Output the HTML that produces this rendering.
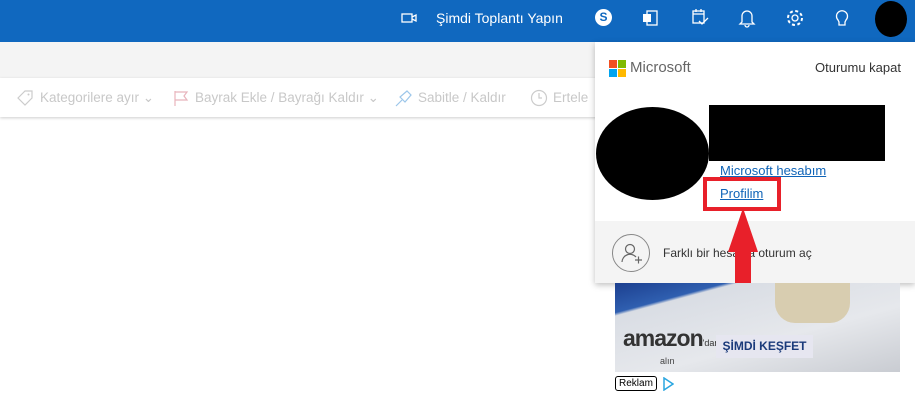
<!DOCTYPE html>
<html><head><meta charset="utf-8"><style>
*{margin:0;padding:0;box-sizing:border-box}
body{width:915px;height:400px;overflow:hidden;background:#fff;font-family:"Liberation Sans",sans-serif;position:relative}
.hdr{position:absolute;left:0;top:0;width:915px;height:42px;background:#1068bf}
.gray{position:absolute;left:0;top:42px;width:915px;height:36px;background:#f4f4f4}
.tb{position:absolute;left:0;top:78px;width:600px;height:39px;background:#fff;box-shadow:0 1px 3px rgba(0,0,0,.2);font-size:13.5px;color:#c8c8c8}
.tb span{position:absolute;top:12px}
.w{color:#fff;position:absolute;font-size:14px}
.panel{position:absolute;left:595px;top:42px;width:320px;height:241px;background:#fff;box-shadow:0 2px 6px rgba(0,0,0,.25)}
.psub{position:absolute;left:0;top:179px;width:320px;height:62px;background:#f4f4f4}
a{color:#0f64b8;text-decoration:underline;font-size:13px;position:absolute}
</style></head><body>
<div class="hdr">
 <svg style="position:absolute;left:401px;top:12px" width="16" height="12"><rect x="1" y="2" width="10" height="8" fill="none" stroke="#fff" stroke-width="1.3"/><path d="M11 5 L15 3 V9 L11 7" fill="none" stroke="#fff" stroke-width="1.3"/></svg>
 <div class="w" style="left:436px;top:10px">Şimdi Toplantı Yapın</div>
 <div style="position:absolute;left:595px;top:9px;width:17px;height:17px;border-radius:50%;background:#fff;color:#1068bf;font-weight:bold;font-size:12px;text-align:center;line-height:17px">S</div>
 <svg style="position:absolute;left:642px;top:9px" width="18" height="18"><rect x="5" y="2" width="10" height="14" fill="none" stroke="#fff" stroke-width="1.3"/><rect x="1" y="5" width="8" height="8" fill="#fff"/></svg>
 <svg style="position:absolute;left:691px;top:8px" width="18" height="18"><rect x="2" y="3" width="11" height="12" fill="none" stroke="#fff" stroke-width="1.3"/><path d="M2 6H13M5 1V4M10 1V4M8 13l3 3 6-6" fill="none" stroke="#fff" stroke-width="1.3"/></svg>
 <svg style="position:absolute;left:738px;top:8px" width="18" height="20"><path d="M4 14V8a5 5 0 0 1 10 0v6l2 2H2z M7 17a2 2 0 0 0 4 0" fill="none" stroke="#fff" stroke-width="1.3"/></svg>
 <svg style="position:absolute;left:785px;top:8px" width="20" height="20"><circle cx="10" cy="10" r="3" fill="none" stroke="#fff" stroke-width="1.3"/><circle cx="10" cy="10" r="7" fill="none" stroke="#fff" stroke-width="2" stroke-dasharray="3 2.5"/></svg>
 <svg style="position:absolute;left:834px;top:8px" width="16" height="20"><path d="M4 12a5.5 5.5 0 1 1 8 0l-1 2v3H5v-3z" fill="none" stroke="#fff" stroke-width="1.3"/></svg>
 <div style="position:absolute;left:875px;top:1px;width:32px;height:36px;border-radius:50%;background:#000"></div>
</div>
<div class="gray"></div>
<div class="tb">
 <svg style="position:absolute;left:16px;top:11px" width="18" height="18"><path d="M2 9 L9 2 H16 V9 L9 16 Z" fill="none" stroke="#ccc" stroke-width="1.2"/><circle cx="12.5" cy="5.5" r="1" fill="#ccc"/></svg>
 <span style="left:40px">Kategorilere ayır ⌄</span>
 <svg style="position:absolute;left:173px;top:12px" width="16" height="16"><path d="M2 1V16M2 2H14L11 6 14 10H2" fill="none" stroke="#e8b4bc" stroke-width="1.2"/></svg>
 <span style="left:195px">Bayrak Ekle / Bayrağı Kaldır ⌄</span>
 <svg style="position:absolute;left:395px;top:11px" width="18" height="18"><path d="M1 17L7 11M5 8L10 13 16 6 12 2Z" fill="none" stroke="#9cc6ea" stroke-width="1.2"/></svg>
 <span style="left:418px">Sabitle / Kaldır</span>
 <svg style="position:absolute;left:530px;top:11px" width="18" height="18"><circle cx="9" cy="9" r="7.5" fill="none" stroke="#ccc" stroke-width="1.2"/><path d="M9 4V9H12" fill="none" stroke="#ccc" stroke-width="1.2"/></svg>
 <span style="left:553px">Ertele</span>
</div>
<div class="panel">
 <svg style="position:absolute;left:14px;top:18px" width="18" height="18"><rect x="0" y="0" width="8" height="8" fill="#f25022"/><rect x="9" y="0" width="8" height="8" fill="#7fba00"/><rect x="0" y="9" width="8" height="8" fill="#00a4ef"/><rect x="9" y="9" width="8" height="8" fill="#ffb900"/></svg>
 <div style="position:absolute;left:35px;top:17px;font-size:15px;color:#666">Microsoft</div>
 <div style="position:absolute;right:14px;top:18px;font-size:13px;color:#333">Oturumu kapat</div>
 <div style="position:absolute;left:1px;top:65px;width:113px;height:93px;border-radius:50%;background:#000"></div>
 <div style="position:absolute;left:114px;top:63px;width:176px;height:56px;background:#000"></div>
 <a style="left:125px;top:121px">Microsoft hesabım</a>
 <div style="position:absolute;left:108px;top:135px;width:78px;height:34px;border:4px solid #e8202a"></div>
 <a style="left:125px;top:144px">Profilim</a>
 <div class="psub">
  <div style="position:absolute;left:17px;top:13px;width:38px;height:38px;border-radius:50%;border:1px solid #888"></div>
  <svg style="position:absolute;left:25px;top:21px" width="24" height="24"><circle cx="10" cy="7" r="4.5" fill="none" stroke="#666" stroke-width="1.2"/><path d="M2 20a8 8 0 0 1 14-5M15 18H22M18.5 14.5V21.5" fill="none" stroke="#666" stroke-width="1.2"/></svg>
  <div style="position:absolute;left:68px;top:25px;font-size:12px;color:#333">Farklı bir hesapla oturum aç</div>
 </div>
</div>
<svg style="position:absolute;left:725px;top:206px" width="36" height="95"><path d="M18 2 L33 46 H26 V92 H10 V46 H3 Z" fill="#e8202a"/></svg>
<div style="position:absolute;left:615px;top:283px;width:285px;height:89px;background:linear-gradient(165deg,#1c3f8f 0%,#2f5fb0 18%,#d9dde4 20%,#e6e8ec 60%,#c9ccd2 100%);overflow:hidden">
 <div style="position:absolute;left:160px;top:0;width:75px;height:40px;background:#d8cdb0;border-radius:0 0 20px 20px"></div>
 <div style="position:absolute;left:8px;top:42px;font-size:23px;font-weight:bold;color:#333;letter-spacing:-1px">amazon<span style="font-size:9px;font-weight:normal;letter-spacing:0">'dan</span></div>
 <div style="position:absolute;left:45px;top:73px;font-size:9px;color:#444">alın</div>
 <div style="position:absolute;left:101px;top:52px;width:97px;height:23px;background:#e6e6f0;color:#1a3a7a;font-weight:bold;font-size:12px;text-align:center;line-height:23px">ŞİMDİ KEŞFET</div>
</div>
<div style="position:absolute;left:615px;top:376px;border:1px solid #000;border-radius:3px;font-size:10px;padding:1px 3px">Reklam</div>
<svg style="position:absolute;left:662px;top:377px" width="12" height="14"><path d="M2 1L11 7 2 13Z" fill="none" stroke="#2aa6e0" stroke-width="1.5"/></svg>
</body></html>
